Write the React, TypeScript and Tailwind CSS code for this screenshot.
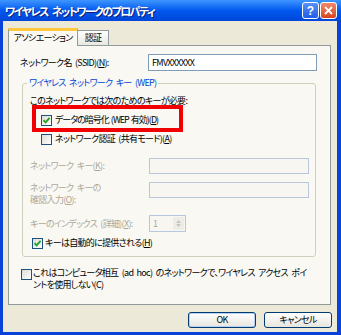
import React from "react";

function Check({ checked = false }: { checked?: boolean }) {
  return (
    <span className="flex h-[11px] w-[11px] shrink-0 items-center justify-center border border-[#1C5180] bg-gradient-to-br from-[#DCDCD7] to-white">
      {checked && (
        <svg width="9" height="9" viewBox="0 0 9 9">
          <path d="M1.5 4.2 L3.6 6.4 L7.6 1.8" fill="none" stroke="#21A121" strokeWidth="1.8" />
        </svg>
      )}
    </span>
  );
}

function Field({ w, h = 16, disabled = false, children }: { w: number; h?: number; disabled?: boolean; children?: React.ReactNode }) {
  return (
    <div
      style={{ width: w, height: h }}
      className={
        disabled
          ? "flex items-center border border-[#B9C7DE] bg-[#F7F6F1] pl-[3px]"
          : "flex items-center border border-[#7F9DB9] bg-white pl-[3px]"
      }
    >
      {children}
    </div>
  );
}

export default function App() {
  return (
    <div className="relative flex h-[335px] w-[341px] flex-col overflow-hidden text-[9px] leading-[12px] tracking-[-0.7px] text-black [word-spacing:2px] [font-family:'Noto_Sans_CJK_JP','Liberation_Sans',sans-serif] [font-feature-settings:'palt'_1]">
      {/* Title bar */}
      <div className="flex h-[21px] shrink-0 items-center bg-gradient-to-b from-[#3D95FF] via-[#0058EE] to-[#0046D8] pl-[5px] pr-[4px]">
        <span className="flex-1 text-[11px] font-bold tracking-[-1.6px] text-white [word-spacing:3px] [text-shadow:1px_1px_0_#0A1E80]">
          ワイヤレス ネットワークのプロパティ
        </span>
        <div className="flex gap-[1px]">
          <div className="flex h-[17px] w-[17px] items-center justify-center rounded-[3px] border border-white bg-gradient-to-b from-[#5A8EF8] to-[#1E5DE8] text-[12px] font-bold leading-none tracking-normal text-white [font-family:'Liberation_Sans',sans-serif]">
            ?
          </div>
          <div className="flex h-[17px] w-[17px] items-center justify-center rounded-[3px] border border-white bg-gradient-to-b from-[#F08A6A] to-[#D8431E]">
            <svg width="9" height="9" viewBox="0 0 9 9">
              <path d="M1 1 L8 8 M8 1 L1 8" stroke="white" strokeWidth="1.8" />
            </svg>
          </div>
        </div>
      </div>

      {/* Client area */}
      <div className="flex flex-1 flex-col border-b-[3px] border-l-[3px] border-r-[4px] border-[#0842D8] bg-[#ECE9D8] pl-[5px] pt-[6px]">
        {/* Tabs */}
        <div className="flex h-[18px] items-end">
          <div className="relative z-10 -mb-px flex h-[18px] w-[70px] items-center justify-center border-x border-[#919B9C] border-t-[3px] border-t-[#FFC83C] bg-[#F9F8F3] pb-[1px]">
            アソシエーション
          </div>
          <div className="flex h-[15px] w-[31px] items-center justify-center border-r border-t border-[#919B9C] bg-gradient-to-b from-white to-[#E8E7E0]">
            認証
          </div>
        </div>

        {/* Panel */}
        <div className="flex h-[260px] w-[323px] flex-col border border-[#919B9C] bg-[#F9F8F3]">
          <div className="ml-[11px] mt-[8px] flex h-[17px] items-center">
            <span className="w-[128px]">
              ネットワーク名 (SSID)(<u>N</u>):
            </span>
            <Field w={169} h={17}>FMVXXXXXX</Field>
          </div>

          <fieldset className="ml-[13px] mt-[6px] flex h-[180px] w-[294px] flex-col rounded-[3px] border border-[#D0D0BF] px-0">
            <legend className="ml-[4px] px-[2px] text-[#0046D5]">ワイヤレス ネットワーク キー (WEP)</legend>

            <div className="ml-[7px] mt-[6px]">このネットワークでは次のためのキーが必要:</div>

            <div className="ml-[18px] mt-[7px] flex h-[12px] items-center gap-[3px]">
              <Check checked />
              <span className="tracking-[-1px] [word-spacing:1px]">
                データの暗号化 (WEP 有効)(<u>D</u>)
              </span>
            </div>
            <div className="ml-[18px] mt-[7px] flex h-[12px] items-center gap-[3px]">
              <Check />
              <span>
                ネットワーク認証 (共有モード)(<u>A</u>)
              </span>
            </div>

            <div className="ml-[7px] mt-[13px] flex h-[16px] items-center text-[#ACA899]">
              <span className="w-[119px]">
                ネットワーク キー(<u>K</u>):
              </span>
              <Field w={160} disabled />
            </div>

            <div className="ml-[7px] mt-[8px] flex items-start text-[#ACA899]">
              <span className="w-[119px] leading-[12px]">
                ネットワーク キーの
                <br />
                確認入力(<u>O</u>):
              </span>
              <Field w={160} disabled />
            </div>

            <div className="ml-[7px] mt-[9px] flex h-[17px] items-center text-[#ACA899]">
              <span className="w-[119px]">
                キーのインデックス (詳細)(<u>X</u>):
              </span>
              <div className="flex h-[17px] w-[37px] items-center justify-between border border-[#B9C7DE] bg-[#F7F6F1] pl-[3px] pr-[1px]">
                <span>1</span>
                <div className="flex h-[13px] w-[11px] flex-col items-center justify-center gap-[1px] rounded-[2px] bg-[#EDEDE8]">
                  <svg width="5" height="3" viewBox="0 0 5 3">
                    <path d="M0 3 L2.5 0 L5 3 Z" fill="#C9C7BA" />
                  </svg>
                  <svg width="5" height="3" viewBox="0 0 5 3">
                    <path d="M0 0 L2.5 3 L5 0 Z" fill="#C9C7BA" />
                  </svg>
                </div>
              </div>
            </div>

            <div className="ml-[9px] mt-[5px] flex h-[12px] items-center gap-[2px]">
              <Check checked />
              <span>
                キーは自動的に提供される(<u>H</u>)
              </span>
            </div>
          </fieldset>

          <div className="ml-[12px] mt-[10px] flex items-start gap-[1px]">
            <div className="mt-[2px]">
              <Check />
            </div>
            <span className="leading-[12px]">
              これはコンピュータ相互 (ad hoc) のネットワークで、ワイヤレス アクセス ポイ
              <br />
              ントを使用しない(C)
            </span>
          </div>
        </div>

        {/* Buttons */}
        <div className="ml-[180px] mt-[7px] flex gap-[8px]">
          <button className="flex h-[16px] w-[68px] items-center justify-center rounded-[3px] border border-[#003C74] bg-gradient-to-b from-white to-[#E6E5DE] shadow-[inset_0_0_0_1px_#B8D0F5]">
            OK
          </button>
          <button className="flex h-[16px] w-[68px] items-center justify-center rounded-[3px] border border-[#003C74] bg-gradient-to-b from-white to-[#E6E5DE]">
            キャンセル
          </button>
        </div>
      </div>

      {/* Red annotation box */}
      <div className="absolute left-[32px] top-[105px] h-[27px] w-[151px] border-4 border-[#F00000]" />
    </div>
  );
}
